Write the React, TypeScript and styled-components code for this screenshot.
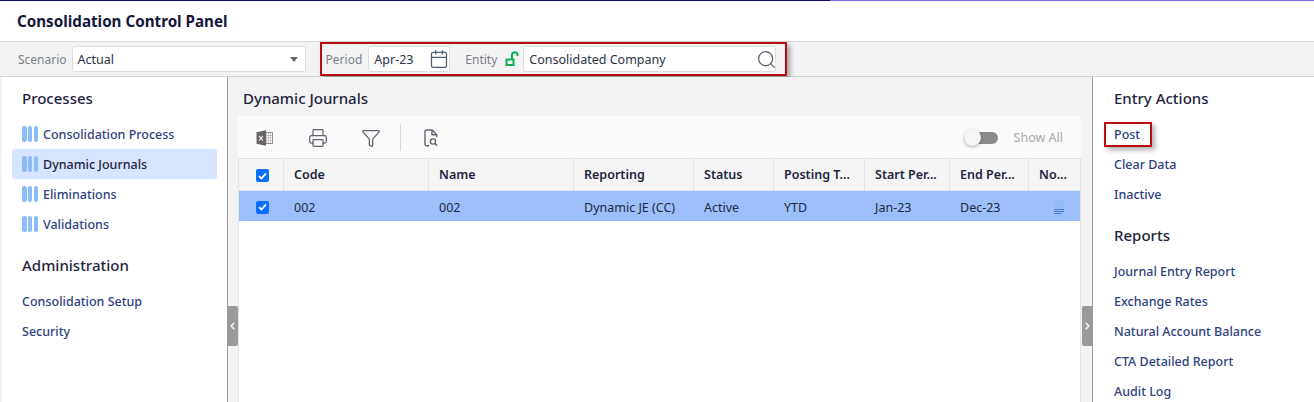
import React from "react"
import styled, { createGlobalStyle } from "styled-components"
import { Search, Printer, Funnel, Calendar, ChevronLeft, ChevronRight } from "lucide-react"

const GlobalStyle = createGlobalStyle`
  html, body {
    margin: 0;
    padding: 0;
    height: 402px;
    overflow: hidden;
    background: #fff;
    font-family: "Noto Sans", "Open Sans", sans-serif;
    font-size: 12.5px;
    color: #1f2440;
  }
  * { box-sizing: border-box; }
`

const Page = styled.div`
  width: 1314px;
  height: 402px;
  display: flex;
  flex-direction: column;
  overflow: hidden;
`

const TopLine = styled.div`
  height: 1px;
  flex: none;
  background: linear-gradient(to right, #0b0b6e 0, #0b0b6e 830px, #8266d8 830px);
`

const Header = styled.header`
  height: 41px;
  flex: none;
  display: flex;
  align-items: center;
  padding: 0 17px 1px;
  background: #fff;
  border-bottom: 1px solid #d9d9d9;
`

const Title = styled.h1`
  margin: 0;
  font-size: 15.2px;
  font-weight: 700;
  color: #14163c;
`

const FilterBar = styled.div`
  height: 35px;
  flex: none;
  display: flex;
  align-items: center;
  padding-left: 18px;
  background: #f3f3f3;
  border-bottom: 1px solid #d4d4d4;
`

const FieldLabel = styled.span`
  color: #7a7f8c;
  font-size: 12px;
  margin-right: 5px;
`

const PeriodLabel = styled(FieldLabel)`
  margin-right: 6px;
`

const Input = styled.div<{ $width: number }>`
  width: ${(p) => p.$width}px;
  height: 26px;
  flex: none;
  display: flex;
  align-items: center;
  justify-content: space-between;
  padding-left: 5px;
  background: #fff;
  border: 1px solid #dedede;
  border-radius: 2px;
  font-size: 12.5px;
  color: #2d3344;
`

const Caret = styled.span`
  width: 0;
  height: 0;
  margin-right: 7px;
  border-left: 4.5px solid transparent;
  border-right: 4.5px solid transparent;
  border-top: 5px solid #666;
`

const SearchIcon = styled(Search)`
  margin-right: -2px;
`

const Highlight = styled.div`
  margin-left: 14px;
  width: 467px;
  height: 34px;
  flex: none;
  display: flex;
  align-items: center;
  padding-left: 4px;
  border: 2px solid #b50f14;
  box-shadow: 3px 3px 5px rgba(60, 60, 60, 0.45);
`

const EntityLabel = styled(FieldLabel)`
  margin-left: 15px;
  margin-right: 8px;
`

const LockIcon = styled.svg`
  margin-right: 4px;
  flex: none;
`

const Main = styled.div`
  flex: 1;
  display: flex;
  min-height: 0;
  padding-left: 2px;
  background: #f3f3f3;
`

const Side = styled.aside<{ $width: number; $side: "left" | "right" }>`
  width: ${(p) => p.$width}px;
  flex: none;
  background: #fff;
  padding: 10px 10px 0 ${(p) => (p.$side === "left" ? 10 : 11)}px;
  border-${(p) => (p.$side === "left" ? "right" : "left")}: 1px solid #9c9c9c;
`

const SideTitle = styled.h2<{ $top?: number }>`
  margin: ${(p) => p.$top ?? 0}px 0 10px 10px;
  height: 22px;
  line-height: 22px;
  font-size: 15px;
  font-weight: 500;
  color: #1f2440;
`

const ProcessItem = styled.div<{ $active?: boolean }>`
  height: 30px;
  display: flex;
  align-items: center;
  gap: 5px;
  padding-left: 10px;
  border-radius: 3px;
  font-size: 12.5px;
  font-weight: 500;
  color: ${(p) => (p.$active ? "#1f2440" : "#2f3f80")};
  background: ${(p) => (p.$active ? "#d6e4ff" : "transparent")};
`

const Bars = styled.span`
  display: flex;
  gap: 1.25px;
  flex: none;
  i {
    display: block;
    width: 4.5px;
    height: 16px;
    border-radius: 2px;
    background: #8abdf8;
  }
`

const LinkItem = styled.div`
  position: relative;
  height: 30px;
  display: flex;
  align-items: center;
  padding-left: 10px;
  font-size: 12.5px;
  font-weight: 500;
  color: #2f3f80;
`

const PostOutline = styled.span`
  position: absolute;
  left: 0;
  top: 3px;
  width: 48px;
  height: 25px;
  border: 2px solid #b50f14;
  box-shadow: 3px 3px 5px rgba(60, 60, 60, 0.4);
`

const Center = styled.main`
  position: relative;
  flex: 1;
  min-width: 0;
  padding: 10px 11px 0 10px;
`

const CenterTitle = styled.h2`
  margin: 0 0 7px 5px;
  height: 22px;
  line-height: 22px;
  font-size: 15px;
  font-weight: 500;
  color: #1f2440;
`

const Toolbar = styled.div`
  height: 42px;
  display: flex;
  align-items: center;
  padding: 1px 0 0 18px;
  background: #fafafa;
`

const ToolButton = styled.span<{ $gap?: number }>`
  display: flex;
  margin-right: ${(p) => p.$gap ?? 0}px;
  color: #5f6470;
`

const ToolDivider = styled.span`
  width: 1px;
  height: 27px;
  background: #d8d8d8;
  margin: 0 23px 0 19px;
`

const ToggleWrap = styled.div`
  margin-left: auto;
  display: flex;
  align-items: center;
  gap: 16px;
  padding-right: 18px;
  font-size: 12.5px;
  color: #a9a9a9;
`

const Toggle = styled.span`
  position: relative;
  width: 34px;
  height: 12px;
  border-radius: 6px;
  background: #8a8a8a;
`

const Knob = styled.span`
  position: absolute;
  left: 0;
  top: -3px;
  width: 17px;
  height: 17px;
  border-radius: 50%;
  background: #f6f6f6;
  box-shadow: 0 1px 3px rgba(0, 0, 0, 0.3);
`

const Table = styled.div`
  height: 300px;
  background: #fff;
  border-left: 1px solid #e4e4e4;
  border-right: 1px solid #e4e4e4;
`

const columns = "45px 145px 145px 120px 80px 91px 85px 79px 52px"

const HeadRow = styled.div`
  display: grid;
  grid-template-columns: ${columns};
  height: 33px;
  background: #f5f5f5;
  border-top: 1px solid #e4e4e4;
  border-bottom: 1px solid #e4e4e4;
`

const HeadCell = styled.div<{ $check?: boolean }>`
  display: flex;
  align-items: center;
  justify-content: ${(p) => (p.$check ? "center" : "flex-start")};
  padding: ${(p) => (p.$check ? "2px 0 0 2px" : "0 0 0 10px")};
  font-size: 12.5px;
  font-weight: 600;
  white-space: nowrap;
  overflow: hidden;
  color: #1f2440;
  border-right: 1px solid #e4e4e4;
  &:last-child {
    border-right: none;
  }
`

const BodyRow = styled.div`
  display: grid;
  grid-template-columns: ${columns};
  height: 30px;
  padding-top: 2px;
  background: #9cbffc;
`

const BodyCell = styled.div<{ $align?: "center" }>`
  display: flex;
  align-items: center;
  justify-content: ${(p) => p.$align ?? "flex-start"};
  padding-left: ${(p) => (p.$align ? 2 : 10)}px;
  font-size: 12.5px;
  white-space: nowrap;
  color: #1f2a3d;
`

const NoteCell = styled(BodyCell)`
  padding-left: 24px;
`

const CheckBox = styled.span`
  width: 13px;
  height: 13px;
  display: flex;
  align-items: center;
  justify-content: center;
  border-radius: 2px;
  background: #0a6ffd;
`

const Handle = styled.div<{ $side: "left" | "right" }>`
  position: absolute;
  top: 229px;
  ${(p) => (p.$side === "left" ? "left: -1px;" : "right: -1px;")}
  width: 11px;
  height: 40px;
  display: flex;
  align-items: center;
  justify-content: center;
  border-radius: ${(p) => (p.$side === "left" ? "0 2px 2px 0" : "2px 0 0 2px")};
  background: #9a9a9a;
  color: #fff;
`

const Check = () => (
  <svg width="9" height="8" viewBox="0 0 9 8" fill="none">
    <path d="M1 4.2 3.4 6.5 8 1.3" stroke="#fff" strokeWidth="1.8" />
  </svg>
)

const ExcelIcon = () => (
  <svg width="17" height="16" viewBox="0 0 17 16">
    <path d="M8 2.500h8.500v11H8z" fill="#fff" stroke="#8d8d8d" />
    <path d="M10.500 3v10M12.500 3v10M14.500 3v10M8 5.500h8.500M8 8h8.500M8 10.500h8.500" stroke="#b5b5b5" strokeWidth=".7" />
    <path d="M0.500 2.200 10 0.200v15.600l-9.500-2z" fill="#6a6464" />
    <path d="M3 6 7 10.500M7 6 3 10.500" stroke="#fff" strokeWidth="1.100" />
  </svg>
)

const ReportSearchIcon = () => (
  <svg width="14" height="18" viewBox="0 0 14 18" fill="none" stroke="currentColor" strokeWidth="1.400">
    <path d="M5 16.800H2.500A1.500 1.500 0 0 1 1 15.300V2.500A1.500 1.500 0 0 1 2.500 1H8l4.800 4.800V8" />
    <path d="M8 1v4.800h4.800" />
    <circle cx="9" cy="12.500" r="2.600" />
    <path d="m11 14.500 2.200 2.200" />
  </svg>
)

const NoteIcon = () => (
  <svg width="12" height="14" viewBox="0 0 12 14">
    <path d="M1 0h7l3 3v11H1z" fill="#94bcf8" />
    <path d="M1 9.500h10M1 11.500h10M1 13.500h7" stroke="#2a5fc0" strokeWidth=".7" />
  </svg>
)

const headers = ["Code", "Name", "Reporting", "Status", "Posting T...", "Start Per...", "End Per...", "No..."]
const row = ["002", "002", "Dynamic JE (CC)", "Active", "YTD", "Jan-23", "Dec-23"]
const processes = ["Consolidation Process", "Dynamic Journals", "Eliminations", "Validations"]
const reports = ["Journal Entry Report", "Exchange Rates", "Natural Account Balance", "CTA Detailed Report", "Audit Log"]

export default function App() {
  return (
    <Page>
      <GlobalStyle />
      <TopLine />
      <Header>
        <Title>Consolidation Control Panel</Title>
      </Header>
      <FilterBar>
        <FieldLabel>Scenario</FieldLabel>
        <Input $width={234}>
          Actual
          <Caret />
        </Input>
        <Highlight>
          <PeriodLabel>Period</PeriodLabel>
          <Input $width={82}>
            Apr-23
            <Calendar size={20} strokeWidth={1.5} color="#4f5b70" />
          </Input>
          <EntityLabel>Entity</EntityLabel>
          <LockIcon width="14" height="16" viewBox="0 0 14 16" fill="none">
            <path d="M1.500 8.500h7v5.500h-7z" stroke="#10ad55" strokeWidth="2" />
            <path d="M7 8V4a2.700 2.700 0 0 1 5.500 0v1" stroke="#10ad55" strokeWidth="2" />
          </LockIcon>
          <Input $width={253}>
            Consolidated Company
            <SearchIcon size={21} strokeWidth={1.4} color="#4f5b70" />
          </Input>
        </Highlight>
      </FilterBar>
      <Main>
        <Side $side="left" $width={226}>
          <SideTitle>Processes</SideTitle>
          {processes.map((name, i) => (
            <ProcessItem key={name} $active={i === 1}>
              <Bars>
                <i />
                <i />
                <i />
              </Bars>
              {name}
            </ProcessItem>
          ))}
          <SideTitle $top={15}>Administration</SideTitle>
          <LinkItem>Consolidation Setup</LinkItem>
          <LinkItem>Security</LinkItem>
        </Side>
        <Center>
          <CenterTitle>Dynamic Journals</CenterTitle>
          <Toolbar>
            <ToolButton $gap={35}>
              <ExcelIcon />
            </ToolButton>
            <ToolButton $gap={33}>
              <Printer size={20} strokeWidth={1.5} />
            </ToolButton>
            <ToolButton>
              <Funnel size={20} strokeWidth={1.5} />
            </ToolButton>
            <ToolDivider />
            <ToolButton>
              <ReportSearchIcon />
            </ToolButton>
            <ToggleWrap>
              <Toggle>
                <Knob />
              </Toggle>
              Show All
            </ToggleWrap>
          </Toolbar>
          <Table>
            <HeadRow>
              <HeadCell $check>
                <CheckBox>
                  <Check />
                </CheckBox>
              </HeadCell>
              {headers.map((h) => (
                <HeadCell key={h}>{h}</HeadCell>
              ))}
            </HeadRow>
            <BodyRow>
              <BodyCell $align="center">
                <CheckBox>
                  <Check />
                </CheckBox>
              </BodyCell>
              {row.map((value, i) => (
                <BodyCell key={i}>{value}</BodyCell>
              ))}
              <NoteCell>
                <NoteIcon />
              </NoteCell>
            </BodyRow>
          </Table>
          <Handle $side="left">
            <ChevronLeft size={12} strokeWidth={3} />
          </Handle>
          <Handle $side="right">
            <ChevronRight size={12} strokeWidth={3} />
          </Handle>
        </Center>
        <Side $side="right" $width={222}>
          <SideTitle>Entry Actions</SideTitle>
          <LinkItem>
            Post
            <PostOutline />
          </LinkItem>
          <LinkItem>Clear Data</LinkItem>
          <LinkItem>Inactive</LinkItem>
          <SideTitle $top={15}>Reports</SideTitle>
          {reports.map((name) => (
            <LinkItem key={name}>{name}</LinkItem>
          ))}
        </Side>
      </Main>
    </Page>
  )
}
